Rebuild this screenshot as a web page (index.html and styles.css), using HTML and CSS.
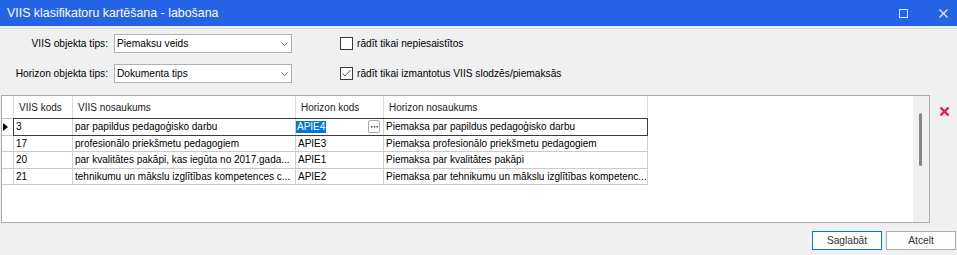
FILE: index.html
```html
<!DOCTYPE html>
<html lang="lv">
<head>
    <meta charset="UTF-8">
    <meta name="viewport" content="width=device-width, initial-scale=1.0">
    <title>VIIS klasifikatoru kartēšana - labošana</title>
    <link rel="stylesheet" href="styles.css">
</head>
<body>
    <div class="titlebar">
        <span class="title">VIIS klasifikatoru kartēšana - labošana</span>
        <div class="winbtns">
            <svg width="9" height="9" viewBox="0 0 9 9"><rect x="0.5" y="0.5" width="8" height="8" fill="none" stroke="#e6edfc" stroke-width="1"/></svg>
            <svg width="9" height="9" viewBox="0 0 9 9"><path d="M0.5 0.5 L8.5 8.5 M8.5 0.5 L0.5 8.5" stroke="#e6edfc" stroke-width="1.2" fill="none"/></svg>
        </div>
    </div>
    <div class="sep"></div>

    <div class="filters">
        <label class="lbl">VIIS objekta tips:</label>
        <div class="combo">
            <span>Piemaksu veids</span>
            <svg width="7" height="4" viewBox="0 0 7 4"><path d="M0.5 0.5 L3.5 3.5 L6.5 0.5" stroke="#707070" fill="none"/></svg>
        </div>
        <label class="chk"><span class="box"></span>rādīt tikai nepiesaistītos</label>

        <label class="lbl">Horizon objekta tips:</label>
        <div class="combo">
            <span>Dokumenta tips</span>
            <svg width="7" height="4" viewBox="0 0 7 4"><path d="M0.5 0.5 L3.5 3.5 L6.5 0.5" stroke="#707070" fill="none"/></svg>
        </div>
        <label class="chk">
            <span class="box"><svg width="11" height="11" viewBox="0 0 11 11"><path d="M1.5 5.5 L4 8 L9.5 2" stroke="#5a5a5a" stroke-width="1" fill="none"/></svg></span>
            rādīt tikai izmantotus VIIS slodzēs/piemaksās
        </label>
    </div>

    <div class="main">
        <div class="grid">
            <div class="table">
                <div class="row hdr">
                    <div class="cell ind"></div>
                    <div class="cell">VIIS kods</div>
                    <div class="cell">VIIS nosaukums</div>
                    <div class="cell">Horizon kods</div>
                    <div class="cell">Horizon nosaukums</div>
                </div>
                <div class="row cur">
                    <div class="cell ind"><span class="arrow"></span></div>
                    <div class="cell">3</div>
                    <div class="cell">par papildus pedagoģisko darbu</div>
                    <div class="cell edit"><span class="sel">APIE4</span><span class="dots"><svg width="7" height="2" viewBox="0 0 7 2"><rect x="0" y="0" width="1.5" height="1.5" fill="#444"/><rect x="2.75" y="0" width="1.5" height="1.5" fill="#444"/><rect x="5.5" y="0" width="1.5" height="1.5" fill="#444"/></svg></span></div>
                    <div class="cell">Piemaksa par papildus pedagoģisko darbu</div>
                </div>
                <div class="row">
                    <div class="cell ind"></div>
                    <div class="cell">17</div>
                    <div class="cell">profesionālo priekšmetu pedagogiem</div>
                    <div class="cell">APIE3</div>
                    <div class="cell">Piemaksa profesionālo priekšmetu pedagogiem</div>
                </div>
                <div class="row">
                    <div class="cell ind"></div>
                    <div class="cell">20</div>
                    <div class="cell">par kvalitātes pakāpi, kas iegūta no 2017.gada...</div>
                    <div class="cell">APIE1</div>
                    <div class="cell">Piemaksa par kvalitātes pakāpi</div>
                </div>
                <div class="row">
                    <div class="cell ind"></div>
                    <div class="cell">21</div>
                    <div class="cell">tehnikumu un mākslu izglītības kompetences c...</div>
                    <div class="cell">APIE2</div>
                    <div class="cell">Piemaksa par tehnikumu un mākslu izglītības kompetenc...</div>
                </div>
            </div>
            <div class="vscroll"><div class="thumb"></div></div>
        </div>
        <div class="side">
            <svg width="11" height="11" viewBox="0 0 11 11"><path d="M1.5 1.5 L9.5 9.5 M9.5 1.5 L1.5 9.5" stroke="#e8184a" stroke-width="2.4" fill="none"/></svg>
        </div>
    </div>

    <div class="footer">
        <button class="default">Saglabāt</button>
        <button>Atcelt</button>
    </div>
</body>
</html>
```

FILE: styles.css
```css
* {
    box-sizing: border-box;
}
body {
    margin: 0;
    width: 957px;
    height: 255px;
    overflow: hidden;
    background: #f0f0f0;
    font-family: "Liberation Sans", Arial, sans-serif;
    font-size: 10.2px;
    color: #000;
}
.titlebar {
    height: 26px;
    background: #2563e6;
    color: #fff;
    display: flex;
    align-items: center;
    justify-content: space-between;
    padding-left: 7px;
    font-size: 12.4px;
}
.winbtns {
    display: flex;
    align-items: center;
    gap: 31px;
    padding-right: 9px;
}
.winbtns svg {
    display: block;
}
.sep {
    height: 3px;
    border-top: 1px solid #dfe7f8;
    border-bottom: 1px solid #d6d6d6;
    background: #f4f4f4;
}
.filters {
    display: grid;
    grid-template-columns: 108px 184px auto;
    grid-auto-rows: 19px;
    row-gap: 11px;
    align-items: center;
    padding: 5px 0 12px;
}
.lbl {
    text-align: right;
}
.combo {
    margin-left: 6px;
    height: 19px;
    border: 1px solid #b0b0b0;
    background: #fff;
    display: flex;
    align-items: center;
    justify-content: space-between;
    padding: 0 3px 0 2px;
}
.chk {
    padding-left: 48px;
    display: flex;
    align-items: center;
    gap: 4px;
}
.box {
    width: 13px;
    height: 13px;
    border: 1px solid #3a3a3a;
    background: #fff;
    display: flex;
    align-items: center;
    justify-content: center;
}
.box svg {
    display: block;
}
.main {
    display: flex;
    height: 128px;
}
.grid {
    margin-left: 1px;
    width: 929px;
    border: 1px solid #ababab;
    background: #fff;
    display: flex;
    justify-content: space-between;
}
.table {
    width: 646px;
    font-size: 10px;
}
.row {
    display: grid;
    grid-template-columns: 12px 59px 223px 88px 264px;
    height: 16.6px;
}
.row.hdr {
    height: 23px;
}
.cell {
    border-right: 1px solid #d2d2d2;
    border-bottom: 1px solid #cacaca;
    display: flex;
    align-items: center;
    white-space: nowrap;
    overflow: hidden;
    padding-left: 2px;
}
.hdr .cell {
    padding-left: 5px;
    color: #1a1a1a;
    border-right-color: #dcdcdc;
    border-bottom-color: #bdbdbd;
}
.cell.ind {
    padding-left: 1px;
}
.row.cur {
    position: relative;
}
.row.cur::after {
    content: "";
    position: absolute;
    left: 11px;
    right: 0;
    top: -1px;
    bottom: 0;
    border: 1px solid #3c3c3c;
    pointer-events: none;
}
.arrow {
    width: 0;
    height: 0;
    border-left: 5px solid #000;
    border-top: 4px solid transparent;
    border-bottom: 4px solid transparent;
}
.edit {
    justify-content: space-between;
    padding-left: 0;
}
.sel {
    background: #0078d7;
    color: #fff;
    padding: 0 1px;
    line-height: 12px;
}
.dots {
    width: 12px;
    height: 13px;
    margin-right: 3px;
    border: 1px solid #a8a8a8;
    border-radius: 2px;
    background: #fff;
    display: flex;
    align-items: center;
    justify-content: center;
}
.dots svg {
    display: block;
}
.vscroll {
    width: 16px;
    background: #f0f0f0;
    padding: 17px 0 0 6px;
}
.thumb {
    width: 3px;
    height: 53px;
    background: #868686;
    border-radius: 2px;
}
.side {
    width: 27px;
    padding: 11px 0 0 9px;
}
.side svg {
    display: block;
}
.footer {
    display: flex;
    justify-content: flex-end;
    gap: 4px;
    padding: 8px 1px 0 0;
}
button {
    width: 70px;
    height: 19px;
    padding: 0;
    font-family: "Liberation Sans", Arial, sans-serif;
    font-size: 10.2px;
    color: #333;
    background: #fdfdfd;
    border: 1px solid #adadad;
}
button.default {
    border-color: #0078d7;
}
```
